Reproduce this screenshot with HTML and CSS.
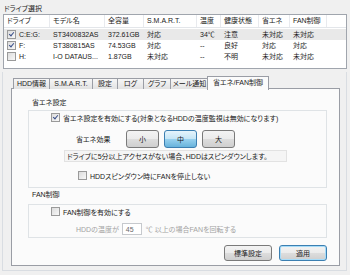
FILE: index.html
```html
<!DOCTYPE html>
<html lang="ja">
<head>
    <meta charset="UTF-8">
    <title>ドライブ選択</title>
    <link rel="stylesheet" href="styles.css">
</head>
<body>
    <div class="window">
        <div class="caption">ドライブ選択</div>

        <div class="drive-list">
            <div class="list-row list-head">
                <span class="cell">ドライブ</span>
                <span class="cell">モデル名</span>
                <span class="cell">全容量</span>
                <span class="cell">S.M.A.R.T.</span>
                <span class="cell">温度</span>
                <span class="cell">健康状態</span>
                <span class="cell">省エネ</span>
                <span class="cell">FAN制御</span>
            </div>
            <div class="list-row selected">
                <span class="cell"><span class="check on"></span>C:E:G:</span>
                <span class="cell">ST3400832AS</span>
                <span class="cell">372.61GB</span>
                <span class="cell">対応</span>
                <span class="cell">34℃</span>
                <span class="cell">注意</span>
                <span class="cell">未対応</span>
                <span class="cell">未対応</span>
            </div>
            <div class="list-row">
                <span class="cell"><span class="check on"></span>F:</span>
                <span class="cell">ST380815AS</span>
                <span class="cell">74.53GB</span>
                <span class="cell">対応</span>
                <span class="cell">--</span>
                <span class="cell">良好</span>
                <span class="cell">対応</span>
                <span class="cell">対応</span>
            </div>
            <div class="list-row">
                <span class="cell"><span class="check"></span>H:</span>
                <span class="cell">I-O DATAUS...</span>
                <span class="cell">1.87GB</span>
                <span class="cell">未対応</span>
                <span class="cell">--</span>
                <span class="cell">不明</span>
                <span class="cell">未対応</span>
                <span class="cell">未対応</span>
            </div>
        </div>

        <div class="frame">
            <div class="tabs">
                <span class="tab">HDD情報</span>
                <span class="tab">S.M.A.R.T.</span>
                <span class="tab">設定</span>
                <span class="tab">ログ</span>
                <span class="tab">グラフ</span>
                <span class="tab">メール通知</span>
                <span class="tab active">省エネ/FAN制御</span>
            </div>

            <div class="tab-page">
                <div class="group-title">省エネ設定</div>
                <div class="group eco">
                    <label class="check-row first">
                        <span class="check on"></span>省エネ設定を有効にする(対象となるHDDの温度監視は無効になります)
                    </label>
                    <div class="effect-row">
                        <span class="effect-label">省エネ効果</span>
                        <button class="btn level">小</button>
                        <button class="btn level pressed">中</button>
                        <button class="btn level">大</button>
                    </div>
                    <div class="note">ドライブに5分以上アクセスがない場合、HDDはスピンダウンします。</div>
                    <label class="check-row spin">
                        <span class="check"></span>HDDスピンダウン時にFANを停止しない
                    </label>
                </div>

                <div class="group-title">FAN制御</div>
                <div class="group fan">
                    <label class="check-row first">
                        <span class="check"></span>FAN制御を有効にする
                    </label>
                    <div class="temp-row">
                        HDDの温度が<span class="num">45</span>℃ 以上の場合FANを回転する
                    </div>
                </div>

                <div class="actions">
                    <button class="btn wide">標準設定</button>
                    <button class="btn wide default">適用</button>
                </div>
            </div>
        </div>
    </div>
</body>
</html>
```

FILE: styles.css
```css
body {
    margin: 0;
    background-color: #f0f0f0;
    font-family: "Liberation Sans", "Noto Sans CJK JP", sans-serif;
    font-size: 7px;
    font-feature-settings: "palt";
    color: #1a1a1a;
}
.window {
    width: 350px;
    height: 275px;
    padding: 4px 3px 0 2px;
    box-sizing: border-box;
    overflow: hidden;
}
.caption {
    height: 10px;
    line-height: 9px;
    margin-left: 2px;
}

/* ドライブ一覧 */
.drive-list {
    margin-left: 1px;
    height: 55px;
    border: 1px solid #a0a5ad;
    background-color: #ffffff;
    box-sizing: border-box;
}
.list-row {
    display: grid;
    grid-template-columns: 46px 55px 39px 53px 24px 38px 31px 37px;
    height: 11px;
    line-height: 11px;
    white-space: nowrap;
}
.list-head {
    height: 12px;
    line-height: 12px;
    border-bottom: 1px solid #e3e6ea;
    margin-bottom: 1px;
}
.list-head .cell {
    border-right: 1px solid #e8eaee;
}
.cell {
    display: flex;
    align-items: center;
    padding-left: 3px;
    overflow: hidden;
}
.selected {
    background-color: #e9e9e9;
}

/* チェックボックス */
.check {
    display: inline-block;
    width: 7px;
    height: 7px;
    border: 1px solid #9a9a9a;
    background: linear-gradient(135deg, #dcdcdc, #f8f8f8);
    margin-right: 3px;
    position: relative;
    flex: none;
}
.check.on::after {
    content: "";
    position: absolute;
    left: 2px;
    top: 0;
    width: 2px;
    height: 4px;
    border: solid #3a4f8a;
    border-width: 0 1.5px 1.5px 0;
    transform: rotate(40deg);
}

/* 枠とタブ */
.frame {
    margin-top: 3px;
    height: 199px;
    border: 1px solid #d9dde2;
    border-top: none;
    box-sizing: border-box;
    padding: 3px 0 0 8px;
}
.tabs {
    display: flex;
    align-items: flex-end;
    height: 14px;
    padding-left: 2px;
    position: relative;
    z-index: 1;
}
.tab {
    height: 10px;
    line-height: 10px;
    border: 1px solid #9a9da5;
    border-bottom: none;
    border-left: none;
    box-sizing: content-box;
    background: linear-gradient(#f6f6f6, #e2e2e2);
    white-space: nowrap;
    text-align: center;
}
.tab:nth-child(1) { width: 35px; border-left: 1px solid #9a9da5; }
.tab:nth-child(2) { width: 42px; }
.tab:nth-child(3) { width: 24px; }
.tab:nth-child(4) { width: 25px; }
.tab:nth-child(5) { width: 26px; }
.tab:nth-child(6) { width: 37px; }
.tab.active {
    height: 13px;
    line-height: 11px;
    width: 60px;
    margin-left: -2px;
    border-left: 1px solid #9a9da5;
    background: #fbfbfb;
    margin-bottom: -1px;
}
.tab-page {
    width: 329px;
    height: 178px;
    border: 1px solid #9a9da5;
    background-color: #fbfbfb;
    box-sizing: border-box;
    padding: 0 12px 0 16px;
    margin-top: -1px;
}

/* グループ */
.group-title {
    height: 10px;
    line-height: 10px;
    margin-left: 4px;
}
.tab-page > .group-title:first-child {
    margin-top: 9px;
}
.group {
    border: 1px solid #dfe3e6;
    box-sizing: border-box;
    margin-top: 2px;
}
.group.eco {
    height: 78px;
    margin-bottom: 2px;
}
.group.fan {
    height: 34px;
    margin-top: 4px;
}
.check-row {
    display: flex;
    align-items: center;
    height: 11px;
    white-space: nowrap;
}
.check-row.first {
    margin-top: 1px;
    padding-left: 22px;
}
.effect-row {
    display: flex;
    align-items: center;
    gap: 5px;
    margin-top: 7px;
    height: 18px;
}
.effect-label {
    margin-left: 47px;
    width: 45px;
}
.btn {
    font-family: inherit;
    font-size: 7px;
    font-feature-settings: "palt";
    color: #1a1a1a;
    border: 1px solid #7a7a7a;
    border-radius: 3px;
    background: linear-gradient(#f3f3f3 0%, #ebebeb 50%, #dddddd 51%, #cfcfcf 100%);
    padding: 0;
}
.btn.level {
    width: 33px;
    height: 18px;
}
.btn.pressed {
    border-color: #3c7fb1;
    background: linear-gradient(#e5f4fc 0%, #c4e5f6 50%, #98d1ef 51%, #68b3db 100%);
}
.note {
    margin: 2px 0 0 35px;
    width: 223px;
    height: 12px;
    line-height: 11px;
    border: 1px solid #e2e2e2;
    background-color: #f5f5f5;
    box-sizing: border-box;
    padding-left: 2px;
    white-space: nowrap;
}
.check-row.spin {
    margin-top: 8px;
    padding-left: 49px;
}
.temp-row {
    display: flex;
    align-items: center;
    margin-top: 6px;
    padding-left: 47px;
    height: 12px;
    color: #a3a3a3;
    white-space: nowrap;
}
.num {
    width: 20px;
    height: 12px;
    line-height: 11px;
    border: 1px solid #c6c9cd;
    background-color: #ffffff;
    box-sizing: border-box;
    margin: 0 4px 0 3px;
    padding-left: 3px;
    color: #6a6a6a;
}
.actions {
    display: flex;
    justify-content: flex-end;
    gap: 7px;
    margin-top: 7px;
}
.btn.wide {
    width: 48px;
    height: 16px;
}
.btn.default {
    border-color: #3c7fb1;
    box-shadow: inset 0 0 0 1px #a6dcf9;
}
```
